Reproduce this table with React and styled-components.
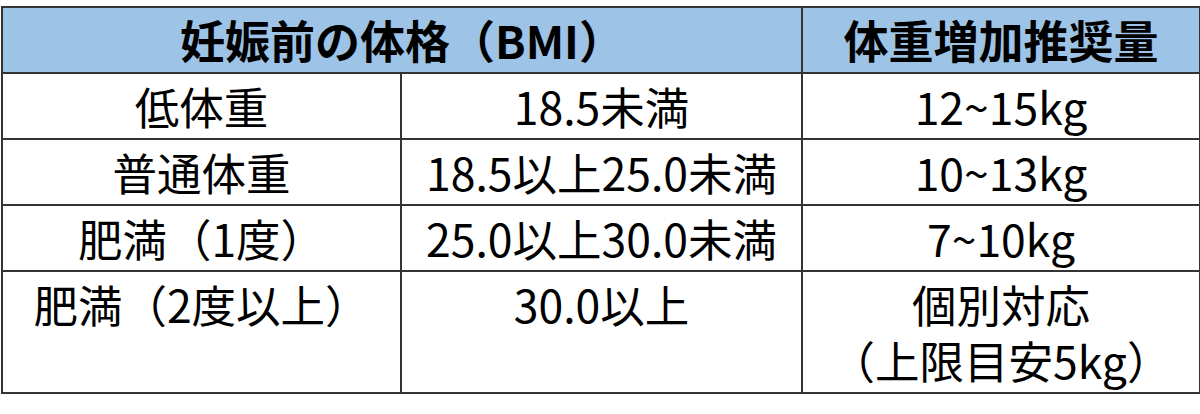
import styled, { createGlobalStyle } from "styled-components";

const GlobalStyle = createGlobalStyle`
    body {
        margin: 0;
        background: #fff;
    }
`

const Page = styled.div`
    padding: 6px 1px 0 1px;
`

const Table = styled.table`
    width: 1198px;
    border-collapse: collapse;
    table-layout: fixed;
    font-family: "Noto Sans CJK JP", "Noto Sans", sans-serif;
    color: #000;
`

const Col = styled.col`
    width: ${props => props.$w}px;
`

const HeadCell = styled.th`
    background-color: #9dc3e6;
    border: 2px solid #333;
    height: 58px;
    padding: 3px 4px;
    font-size: 45px;
    font-weight: 700;
    line-height: 58px;
    text-align: center;
    vertical-align: top;
`

const Cell = styled.td`
    border: 2px solid #333;
    padding: 4px 4px;
    font-size: 44.5px;
    font-weight: 400;
    line-height: 56px;
    text-align: center;
    vertical-align: top;
    white-space: pre-line;
`

const rows = [
    ["低体重", "18.5未満", "12~15kg"],
    ["普通体重", "18.5以上25.0未満", "10~13kg"],
    ["肥満（1度）", "25.0以上30.0未満", "7~10kg"],
    ["肥満（2度以上）", "30.0以上", "個別対応\n（上限目安5kg）"],
]

function App() {
    return (
        <Page>
            <GlobalStyle />
            <Table>
                <colgroup>
                    <Col $w={399} />
                    <Col $w={401} />
                    <Col $w={398} />
                </colgroup>
                <thead>
                    <tr>
                        <HeadCell colSpan={2}>妊娠前の体格（BMI）</HeadCell>
                        <HeadCell>体重増加推奨量</HeadCell>
                    </tr>
                </thead>
                <tbody>
                    {rows.map((row, i) =>
                        <tr key={i}>
                            {row.map((text, j) => <Cell key={j}>{text}</Cell>)}
                        </tr>
                    )}
                </tbody>
            </Table>
        </Page>
    )
}

export default App;
